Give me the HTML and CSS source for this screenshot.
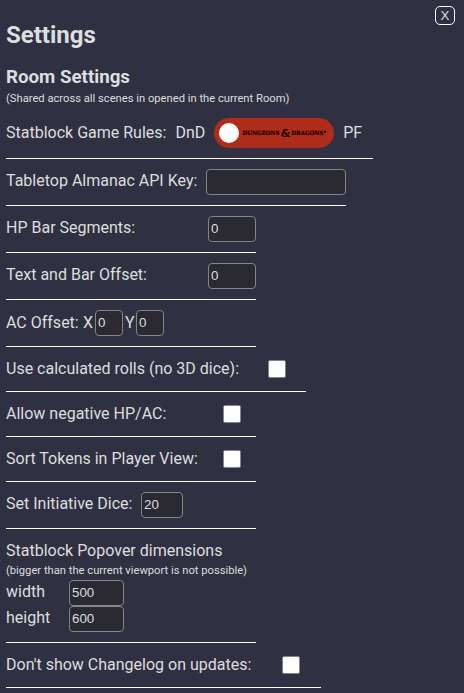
FILE: index.html
```html
<!DOCTYPE html>
<html lang="en">
<head>
<meta charset="utf-8">
<title>Settings</title>
<link rel="stylesheet" href="styles.css">
</head>
<body>
<button class="close" type="button">X</button>
<main class="settings">
  <h1>Settings</h1>
  <h2>Room Settings</h2>
  <p class="note">(Shared across all scenes in opened in the current Room)</p>
  <section class="row rules">
    <span class="label">Statblock Game Rules:</span><span class="dnd">DnD</span>
    <span class="switch"><span class="knob"></span>
      <svg class="logo" viewBox="0 0 86 14" width="86" height="14">
        <text x="0.5" y="9" textLength="37" lengthAdjust="spacingAndGlyphs">DUNGEONS</text>
        <text class="amp" x="39" y="10.8" textLength="9" lengthAdjust="spacingAndGlyphs">&amp;</text>
        <text x="49.3" y="9" textLength="32" lengthAdjust="spacingAndGlyphs">DRAGONS</text>
        <path d="M82 5h2v1.4h-2z"/>
      </svg>
    </span>
    <span>PF</span>
  </section>
  <section class="row key"><label>Tabletop Almanac API Key:</label><input type="text"></section>
  <section class="row"><label>HP Bar Segments:</label><input class="w48" type="text" value="0"></section>
  <section class="row"><label>Text and Bar Offset:</label><input class="w48" type="text" value="0"></section>
  <section class="row ac"><label>AC Offset:</label><span class="x">X</span><input class="w28" type="text" value="0"><span class="y">Y</span><input class="w28" type="text" value="0"></section>
  <section class="row check rolls"><label>Use calculated rolls (no 3D dice):</label><span class="box"></span></section>
  <section class="row check"><label>Allow negative HP/AC:</label><span class="box"></span></section>
  <section class="row check"><label>Sort Tokens in Player View:</label><span class="box"></span></section>
  <section class="row dice"><label>Set Initiative Dice:</label><input class="w42" type="text" value="20"></section>
  <section class="popover">
    <div class="title">Statblock Popover dimensions</div>
    <p class="note">(bigger than the current viewport is not possible)</p>
    <div class="dim"><label>width</label><input type="text" value="500"></div>
    <div class="dim"><label>height</label><input type="text" value="600"></div>
  </section>
  <section class="row check log"><label>Don't show Changelog on updates:</label><span class="box"></span></section>
</main>
</body>
</html>
```

FILE: styles.css
```css
* { box-sizing: border-box; }
body {
  margin: 0;
  height: 693px;
  overflow: hidden;
  background: #2f3142;
  color: #dedede;
  font: 16px/24px Roboto, sans-serif;
}
.settings { padding: 20px 6px 0; }
h1, h2, p { margin: 0; }
h1 { font-size: 24px; line-height: 30px; font-weight: 700; }
h2 { margin-top: 15px; font-size: 18.72px; line-height: 24px; font-weight: 700; }
.note { padding-top: 1px; font-size: 11.2px; line-height: 17px; white-space: nowrap; }
.close {
  position: absolute;
  top: 6px;
  left: 435px;
  width: 20px;
  height: 19px;
  padding: 0;
  border: 1px solid #fff;
  border-radius: 5px;
  background: none;
  color: #dedede;
  font: 13.333px/17px "Liberation Sans", sans-serif;
}
.row {
  display: flex;
  align-items: flex-start;
  justify-content: space-between;
  width: 250px;
  height: 47px;
  padding-top: 10px;
  border-bottom: 1px solid #fff;
  white-space: nowrap;
}
.row.rules {
  width: 367px;
  height: 52px;
  padding: 0;
  align-items: center;
  justify-content: flex-start;
}
.dnd { margin: 0 9px; }
.switch {
  display: flex;
  align-items: center;
  width: 120px;
  height: 30px;
  margin-right: 9px;
  padding-left: 5px;
  border-radius: 15px;
  background: #b02c1a;
}
.knob { flex: none; width: 20px; height: 20px; margin-right: 3px; border-radius: 50%; background: #fff; }
.logo { display: block; flex: none; font: 700 5.8px "DejaVu Serif", serif; fill: #120504; stroke: #120504; stroke-width: .2px; }
.amp { font-size: 10.5px; }
.row.key { width: 340px; }
input {
  flex: none;
  width: 140px;
  height: 26px;
  margin: 0;
  padding: 0 2px 1px;
  border: 1px solid #858585;
  border-radius: 4px;
  background: #2b2a33;
  color: #dedede;
  font: 13.333px "Liberation Sans", sans-serif;
}
.w48 { width: 48px; }
.w42 { width: 42px; }
.w28 { width: 28px; }
.ac, .dice { justify-content: flex-start; }
.ac label, .ac span { padding-top: 1px; }
.ac label { width: 77px; }
.x { width: 12px; }
.y { width: 11px; margin-left: 2px; }
.dice label { width: 135px; }
.row.check { height: 45px; }
.box {
  width: 18px;
  height: 18px;
  margin: 3px 15px 0 0;
  border: 1px solid #858585;
  border-radius: 2px;
  background: #fff;
}
.rolls { width: 300px; }
.rolls .box { margin-right: 20px; }
.row.log { width: 315px; }
.log .box { margin-right: 21px; }
.popover { width: 250px; height: 114px; padding-top: 10px; border-bottom: 1px solid #fff; }
.popover .note { padding: 0 0 1px; line-height: 16px; }
.dim { display: flex; height: 26px; }
.dim label { width: 63px; }
.dim input { width: 55px; }
```
